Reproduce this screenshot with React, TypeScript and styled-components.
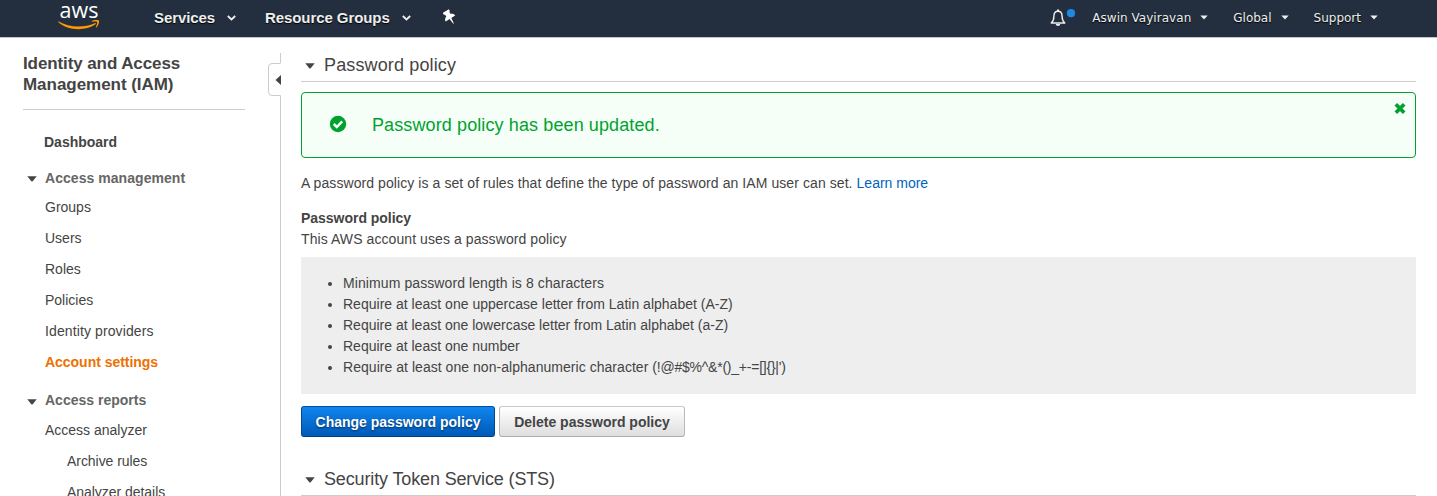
import React from "react";
import styled, { createGlobalStyle } from "styled-components";

const GlobalStyle = createGlobalStyle`
  *, *::before, *::after { box-sizing: border-box; }
  html, body { margin: 0; padding: 0; background: #fff; overflow: hidden; }
  body { font-family: "Liberation Sans", Arial, sans-serif; font-size: 14px; color: #444; }
  ul { margin: 0; padding: 0; }
`;

const Page = styled.div`
  height: 496px;
  display: flex;
  flex-direction: column;
  overflow: hidden;
`;

const TopBar = styled.header`
  flex: none;
  display: flex;
  align-items: center;
  height: 38px;
  padding-right: 59px;
  background: #232f3e;
  border-bottom: 1px solid #c4c7cb;
`;

const Logo = styled.div`
  width: 42px;
  height: 37px;
  margin: 0 54px 0 58px;
  display: flex;
  flex-direction: column;
  align-items: center;
  color: #fff;
`;

const LogoWord = styled.span`
  height: 20px;
  font: 500 21.5px/20px "Open Sans", sans-serif;
`;

const MainMenu = styled.button<{ $track?: number; $after: number }>`
  display: flex;
  align-items: center;
  gap: 12px;
  height: 35px;
  padding: 0;
  margin: 0 ${(p) => p.$after}px 2px 0;
  border: 0;
  background: none;
  color: #eee;
  font: bold 15px/20px "Liberation Sans", Arial, sans-serif;
  letter-spacing: ${(p) => p.$track ?? 0}px;
  text-shadow: 0 1px 1px #000;
  white-space: nowrap;
`;

const AccountMenu = styled(MainMenu)`
  gap: 9px;
  font: 12px/20px "DejaVu Sans", Verdana, sans-serif;
`;

const Spacer = styled.div`
  flex: 1;
`;

const Bell = styled.div`
  display: flex;
  margin: 0 16px 2px 0;
`;

const Body = styled.div`
  flex: 1;
  min-height: 0;
  display: flex;
`;

const Sidebar = styled.nav`
  width: 268px;
  padding: 15px 0 0 23px;
  flex: none;
`;

const ServiceTitle = styled.h1`
  margin: 0;
  width: 222px;
  height: 57px;
  border-bottom: 1px solid #ccc;
  font-size: 17px;
  line-height: 21px;
`;

const Line = styled.span<{ $track?: number }>`
  letter-spacing: ${(p) => (p.$track === undefined ? "inherit" : `${p.$track}px`)};
  white-space: nowrap;
`;

const NavLink = styled.a<{ $indent?: number; $active?: boolean; $track?: number }>`
  display: block;
  height: 31px;
  padding-left: ${(p) => p.$indent ?? 22}px;
  line-height: 31px;
  letter-spacing: ${(p) => p.$track ?? 0}px;
  color: ${(p) => (p.$active ? "#ee7000" : "#444")};
  font-weight: ${(p) => (p.$active ? "bold" : "normal")};
  white-space: nowrap;
`;

const Dashboard = styled(NavLink)`
  margin: 17px 0 6px;
  font-weight: bold;
`;

const NavGroup = styled.div<{ $track?: number; $height: number; $top?: number }>`
  display: flex;
  align-items: center;
  gap: 8px;
  padding-left: 4px;
  margin-top: ${(p) => p.$top ?? 0}px;
  height: ${(p) => p.$height}px;
  font-weight: bold;
  color: #666;
  letter-spacing: ${(p) => p.$track ?? 0}px;
  white-space: nowrap;
`;

const Divider = styled.div`
  width: 13px;
  flex: none;
  padding-top: 15px;
  display: flex;
  flex-direction: column;
  align-items: flex-end;
`;

const Rule = styled.div<{ $height?: number }>`
  width: 1px;
  background: #ccc;
  ${(p) => (p.$height ? `height: ${p.$height}px;` : "flex: 1;")}
`;

const Content = styled.main`
  flex: 1;
  min-width: 0;
  padding: 14px 21px 0 20px;
`;

const SectionHead = styled.h2<{ $track?: number }>`
  display: flex;
  align-items: center;
  gap: 9px;
  margin: 0;
  height: 30px;
  padding: 0 0 3px 4px;
  border-bottom: 1px solid #ccc;
  font-size: 18px;
  font-weight: normal;
  letter-spacing: ${(p) => p.$track ?? 0}px;
`;

const Alert = styled.div`
  display: flex;
  height: 66px;
  margin-top: 10px;
  padding: 0 9px 0 27px;
  border: 1px solid #00a22f;
  border-radius: 4px;
  background: #f5fff8;
  color: #00a22f;
  align-items: center;
`;

const AlertText = styled.div<{ $track?: number }>`
  flex: 1;
  margin-left: 25px;
  font-size: 18px;
  letter-spacing: ${(p) => p.$track ?? 0}px;
`;

const CloseButton = styled.button`
  display: flex;
  align-self: flex-start;
  margin-top: 9px;
  padding: 0;
  border: 0;
  background: none;
`;

const Paragraph = styled.p<{ $track?: number; $top?: number; $bold?: boolean }>`
  margin: ${(p) => p.$top ?? 0}px 0 0;
  line-height: 21px;
  letter-spacing: ${(p) => p.$track ?? 0}px;
  font-weight: ${(p) => (p.$bold ? "bold" : "normal")};
`;

const Learn = styled.a`
  color: #0063be;
  letter-spacing: 0;
`;

const RuleList = styled.ul`
  height: 137px;
  margin-top: 7px;
  padding: 16px 0 0 24px;
  background: #eee;
  list-style: none;
`;

const RuleItem = styled.li<{ $track?: number }>`
  display: flex;
  align-items: center;
  line-height: 21px;
  letter-spacing: ${(p) => p.$track ?? 0}px;
  white-space: pre;
  &::before {
    content: "";
    width: 4px;
    height: 4px;
    margin: 1px 11px 0 3px;
    border-radius: 50%;
    background: #444;
  }
`;

const Buttons = styled.div`
  display: flex;
  gap: 4px;
  margin: 12px 0 29px;
`;

const Button = styled.button<{ $primary?: boolean; $width: number }>`
  width: ${(p) => p.$width}px;
  height: 31px;
  padding: 0;
  border: 1px solid;
  border-color: ${(p) => (p.$primary ? "#00519e #004b91 #004280" : "#c9c9c9 #b8b8b8 #adadad")};
  border-radius: 3px;
  background: ${(p) => (p.$primary ? "linear-gradient(#1085ee, #0059b8)" : "linear-gradient(#fff, #dedede)")};
  color: ${(p) => (p.$primary ? "#fff" : "#444")};
  font: bold 14px/20px "Liberation Sans", Arial, sans-serif;
  text-shadow: ${(p) => (p.$primary ? "0 1px 2px #002f5c" : "none")};
  white-space: nowrap;
`;

const CaretIcon = styled.svg<{ $drop?: number }>`
  flex: none;
  margin-top: ${(p) => p.$drop ?? 2}px;
`;

const Caret = ({ drop }: { drop?: number }) => (
  <CaretIcon $drop={drop} width="10" height="6" viewBox="0 0 10 6">
    <path d="M.3 .3h9.400L5.700 5.200q-.7.700-1.400 0z" fill="#444" />
  </CaretIcon>
);

const Chevron = () => (
  <svg width="9" height="6" viewBox="0 0 9 6" fill="none" stroke="#eee" strokeWidth="1.8">
    <path d="M.8 1l3.700 3.500L8.200 1" />
  </svg>
);

const SmallCaret = () => (
  <svg width="8" height="5" viewBox="0 0 8 5">
    <path d="M.3 .5h7.400L4 4.500z" fill="#eee" />
  </svg>
);

const Smile = () => (
  <svg width="42" height="11" viewBox="0 0 42 11">
    <path d="M.3 1.200C10.800 7.600 25.500 8.200 36.700 3.200c1-.4 1.600.5.8 1.100C27.200 11.400 10.200 11 .1 2z" fill="#ff9900" />
    <path d="M34 .9c2.200-1.300 6.300-1.100 6.900-.5.6.7-.2 5.200-2.500 7-.4.3-.7.1-.5-.3.6-1.500 1.700-4.500 1.200-5.100-.6-.7-3.500-.4-4.900-.3-.6 0-.6-.4-.2-.8z" fill="#ff9900" />
  </svg>
);

const PinIcon = styled.svg`
  margin-bottom: 3px;
`;

const Pin = () => (
  <PinIcon width="14" height="16" viewBox="0 0 14 16">
    <g transform="translate(6 7.200) rotate(-32)" fill="#fff">
      <path d="M-3.600-6h7.200v2l-1.100.6v2.200c2 .7 3.100 2 3.100 3.900H-5.600c0-1.900 1.100-3.200 3.100-3.900v-2.200l-1.100-.6z" />
      <path d="M-1.100 2.400H1.100L.3 8.600h-.6z" />
    </g>
  </PinIcon>
);

const BellIcon = () => (
  <svg width="26" height="20" viewBox="0 0 26 20">
    <path d="M1.200 15c2.200-1.700 2.700-3.700 2.700-6.700C3.900 5 5.300 3.200 8 3.200s4.100 1.800 4.100 5.100c0 3 .5 5 2.700 6.700z" fill="none" stroke="#eee" strokeWidth="1.400" strokeLinejoin="round" />
    <path d="M7 1.400h2v1.600H7zM5.600 16h4.800q-.4 2-2.400 2t-2.400-2z" fill="#eee" />
    <circle cx="21" cy="5.200" r="4.100" fill="#1e88e5" />
  </svg>
);

const CollapseTab = () => (
  <svg width="13" height="34" viewBox="0 0 13 34">
    <path d="M12.500 .5H4Q.5 .5 .5 4V29Q.5 32.500 4 32.500H12.500V34" fill="none" stroke="#ccc" />
    <path d="M13 12v10L7.500 17z" fill="#444" />
  </svg>
);

const CheckIcon = styled.svg`
  flex: none;
  margin-bottom: 2px;
`;

const CloseIcon = () => (
  <svg width="12" height="12" viewBox="0 0 12 12">
    <path d="M1.800 2.300l8.400 8.400M10.200 2.300l-8.400 8.400" stroke="#00a22f" strokeWidth="3.700" />
  </svg>
);

export default function App() {
  return (
    <Page>
      <GlobalStyle />
      <TopBar>
        <Logo>
          <LogoWord>aws</LogoWord>
          <Smile />
        </Logo>
        <MainMenu $after={29} $track={-0.1}><Line>Services</Line><Chevron /></MainMenu>
        <MainMenu $after={32} $track={-0.07}><Line>Resource Groups</Line><Chevron /></MainMenu>
        <Pin />
        <Spacer />
        <Bell><BellIcon /></Bell>
        <AccountMenu $after={25} $track={0.04}><Line>Aswin Vayiravan</Line><SmallCaret /></AccountMenu>
        <AccountMenu $after={25}><Line>Global</Line><SmallCaret /></AccountMenu>
        <AccountMenu $after={0}><Line>Support</Line><SmallCaret /></AccountMenu>
      </TopBar>
      <Body>
        <Sidebar>
          <ServiceTitle>
            <Line $track={-0.1}>Identity and Access</Line><br /><Line $track={-0.04}>Management (IAM)</Line>
          </ServiceTitle>
          <Dashboard $indent={21}>Dashboard</Dashboard>
          <NavGroup $height={28} $track={0.05}><Caret /><Line>Access management</Line></NavGroup>
          <NavLink>Groups</NavLink>
          <NavLink>Users</NavLink>
          <NavLink>Roles</NavLink>
          <NavLink>Policies</NavLink>
          <NavLink $track={0.11}>Identity providers</NavLink>
          <NavLink $active $track={-0.03}>Account settings</NavLink>
          <NavGroup $height={30} $top={7}><Caret drop={4} /><Line>Access reports</Line></NavGroup>
          <NavLink>Access analyzer</NavLink>
          <NavLink $indent={44} $track={-0.05}>Archive rules</NavLink>
          <NavLink $indent={44} $track={-0.04}>Analyzer details</NavLink>
        </Sidebar>
        <Divider>
          <Rule $height={10} />
          <CollapseTab />
          <Rule />
        </Divider>
        <Content>
          <SectionHead $track={0.14}><Caret /><Line>Password policy</Line></SectionHead>
          <Alert>
            <CheckIcon width="18" height="18" viewBox="0 0 18 18">
              <circle cx="9" cy="9" r="8.200" fill="#00a22f" />
              <path d="M4.800 9l3 3 5.400-5.600" fill="none" stroke="#fff" strokeWidth="2.500" />
            </CheckIcon>
            <AlertText $track={0.11}>Password policy has been updated.</AlertText>
            <CloseButton aria-label="Close"><CloseIcon /></CloseButton>
          </Alert>
          <Paragraph $top={15} $track={0.077}>
            <Line>A password policy is a set of rules that define the type of password an IAM user can set.</Line>{" "}
            <Learn>Learn more</Learn>
          </Paragraph>
          <Paragraph $top={14} $bold $track={-0.03}>Password policy</Paragraph>
          <Paragraph $track={0.08}>This AWS account uses a password policy</Paragraph>
          <RuleList>
            <RuleItem $track={0.09}>Minimum password length is 8 characters</RuleItem>
            <RuleItem $track={0.01}>Require at least one uppercase letter from Latin alphabet (A-Z)</RuleItem>
            <RuleItem>Require at least one lowercase letter from Latin alphabet (a-Z)</RuleItem>
            <RuleItem>Require at least one number</RuleItem>
            <RuleItem $track={0.04}>
              <Line>{"Require at least one non-alphanumeric character\u00a0"}</Line>
              <Line $track={-0.23}>{"(!@#$%^&*()_+-=[]{}|')"}</Line>
            </RuleItem>
          </RuleList>
          <Buttons>
            <Button $primary $width={194}>Change password policy</Button>
            <Button $width={186}>Delete password policy</Button>
          </Buttons>
          <SectionHead $track={-0.14}><Caret /><Line>Security Token Service (STS)</Line></SectionHead>
        </Content>
      </Body>
    </Page>
  );
}
